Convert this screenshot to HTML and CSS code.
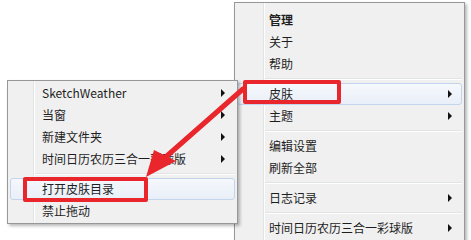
FILE: index.html
```html
<!DOCTYPE html>
<html>
<head>
  <title>皮肤菜单</title>
  <meta charset="utf-8">
  <link rel="stylesheet" href="styles.css">
</head>
<body>
  <div class="screen">

    <div class="menu menu-main">
      <div class="item default"><span>管理</span></div>
      <div class="item"><span>关于</span></div>
      <div class="item"><span>帮助</span></div>
      <div class="sep"></div>
      <div class="item hot"><span>皮肤</span><i class="caret"></i></div>
      <div class="item"><span>主题</span><i class="caret"></i></div>
      <div class="sep"></div>
      <div class="item"><span>编辑设置</span></div>
      <div class="item"><span>刷新全部</span></div>
      <div class="sep"></div>
      <div class="item"><span>日志记录</span><i class="caret"></i></div>
      <div class="sep"></div>
      <div class="item"><span>时间日历农历三合一彩球版</span><i class="caret"></i></div>
      <div class="item"><span></span></div>
    </div>

    <div class="menu menu-sub">
      <div class="item"><span>SketchWeather</span><i class="caret"></i></div>
      <div class="item"><span>当窗</span><i class="caret"></i></div>
      <div class="item"><span>新建文件夹</span><i class="caret"></i></div>
      <div class="item"><span>时间日历农历三合一彩球版</span><i class="caret"></i></div>
      <div class="sep"></div>
      <div class="item hot"><span>打开皮肤目录</span></div>
      <div class="item"><span>禁止拖动</span></div>
    </div>

    <!-- 标注 -->
    <div class="mark mark-skin"></div>
    <div class="mark mark-open"></div>
    <svg class="arrow" width="471" height="240" viewBox="0 0 471 240">
      <line x1="243" y1="89" x2="160" y2="162" stroke="#e8262b" stroke-width="5" stroke-linecap="round"/>
      <polygon points="146,177 154,150 176,161" fill="#e8262b"/>
    </svg>

  </div>
</body>
</html>
```

FILE: styles.css
```css
body{
  margin: 0;
  background-color: #fff;
}

.screen{
  position: relative;
  width: 471px;
  height: 240px;
  overflow: hidden;
  background-color: #fff;
  font-family: "Noto Sans CJK SC", "Noto Sans", sans-serif;
  font-size: 12px;
  color: #1e1e1e;
}

/* 菜单 */
.menu{
  position: absolute;
  width: 225px;
  padding: 2px;
  background-color: #f0f0f0;
  border: 1px solid #979797;
  box-shadow: 2px 2px 3px rgba(0,0,0,0.28);
}
.menu::before{
  content: "";
  position: absolute;
  top: 0;
  bottom: 0;
  left: 28px;
  width: 1px;
  background-color: #e2e3e3;
  border-right: 1px solid #fff;
}

.menu-main{
  left: 234px;
  top: 2px;
  padding-top: 6px;
  z-index: 1;
}

.menu-sub{
  left: 7px;
  top: 80px;
  padding-top: 1px;
  padding-bottom: 1px;
  z-index: 2;
}
.menu-sub::before{
  left: 25px;
}

.item{
  position: relative;
  display: flex;
  align-items: center;
  height: 22px;
  padding-left: 31px;
  border: 1px solid transparent;
  border-radius: 3px;
  box-sizing: border-box;
  line-height: 1;
  z-index: 1;
}
.item.default{
  font-weight: 700;
}
.item.hot{
  border-color: #c3d5ec;
  background: linear-gradient(#f5f8fc, #e9eff8);
}

.caret{
  margin-left: auto;
  margin-right: 9px;
  width: 0;
  height: 0;
  border-left: 4px solid #111;
  border-top: 4px solid transparent;
  border-bottom: 4px solid transparent;
}

.sep{
  height: 1px;
  margin: 3px 0 3px 28px;
  background-color: #e2e3e3;
  border-bottom: 1px solid #fff;
}
.menu-sub .sep{
  margin-left: 25px;
}

/* 红色标注 */
.mark{
  position: absolute;
  border: 4px solid #e8262b;
  border-radius: 2px;
  box-sizing: border-box;
  z-index: 3;
}
.mark-skin{
  left: 243px;
  top: 80px;
  width: 98px;
  height: 24px;
}
.mark-open{
  left: 23px;
  top: 177px;
  width: 125px;
  height: 25px;
}

.arrow{
  position: absolute;
  left: 0;
  top: 0;
  z-index: 4;
}
```
